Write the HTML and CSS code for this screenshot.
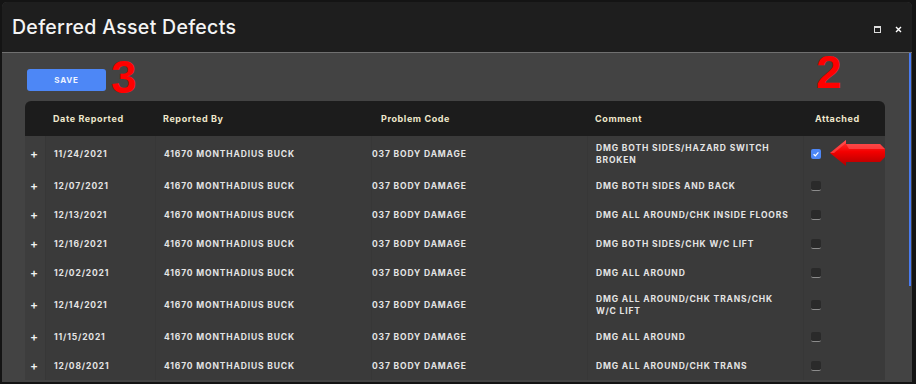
FILE: index.html
```html
<!DOCTYPE html>
<html>
<head>
    <title>Deferred Asset Defects</title>
    <link rel="stylesheet" href="styles.css">
</head>
<body>
    <div class="window">
        <div class="titlebar">
            <h1>Deferred Asset Defects</h1>
            <div class="win-actions">
                <span class="icon-max"></span>
                <svg class="icon-close" width="7" height="7" viewBox="0 0 7 7">
                    <path d="M1 1 L6 6 M6 1 L1 6" stroke="#fff" stroke-width="1.4"/>
                </svg>
            </div>
        </div>
        <div class="content">
            <div class="toolbar">
                <button class="btn-save">SAVE</button>
            </div>
            <table class="grid">
                <colgroup>
                    <col class="c-exp">
                    <col class="c-date">
                    <col class="c-by">
                    <col class="c-code">
                    <col class="c-comment">
                    <col class="c-att">
                </colgroup>
                <thead>
                    <tr>
                        <th></th>
                        <th>Date Reported</th>
                        <th>Reported By</th>
                        <th class="th-code">Problem Code</th>
                        <th>Comment</th>
                        <th class="th-att">Attached</th>
                    </tr>
                </thead>
                <tbody>
                    <tr>
                        <td class="exp">+</td>
                        <td>11/24/2021</td>
                        <td>41670 MONTHADIUS BUCK</td>
                        <td class="code">037 BODY DAMAGE</td>
                        <td>DMG BOTH SIDES/HAZARD SWITCH<br>BROKEN</td>
                        <td class="att"><span class="chk on"><svg width="10" height="10" viewBox="0 0 10 10"><path d="M2.6 5.2 L4.3 6.8 L7.4 3.4" fill="none" stroke="#fff" stroke-width="1.2"/></svg></span></td>
                    </tr>
                    <tr>
                        <td class="exp">+</td>
                        <td>12/07/2021</td>
                        <td>41670 MONTHADIUS BUCK</td>
                        <td class="code">037 BODY DAMAGE</td>
                        <td>DMG BOTH SIDES AND BACK</td>
                        <td class="att"><span class="chk"></span></td>
                    </tr>
                    <tr>
                        <td class="exp">+</td>
                        <td>12/13/2021</td>
                        <td>41670 MONTHADIUS BUCK</td>
                        <td class="code">037 BODY DAMAGE</td>
                        <td>DMG ALL AROUND/CHK INSIDE FLOORS</td>
                        <td class="att"><span class="chk"></span></td>
                    </tr>
                    <tr>
                        <td class="exp">+</td>
                        <td>12/16/2021</td>
                        <td>41670 MONTHADIUS BUCK</td>
                        <td class="code">037 BODY DAMAGE</td>
                        <td>DMG BOTH SIDES/CHK W/C LIFT</td>
                        <td class="att"><span class="chk"></span></td>
                    </tr>
                    <tr>
                        <td class="exp">+</td>
                        <td>12/02/2021</td>
                        <td>41670 MONTHADIUS BUCK</td>
                        <td class="code">037 BODY DAMAGE</td>
                        <td>DMG ALL AROUND</td>
                        <td class="att"><span class="chk"></span></td>
                    </tr>
                    <tr>
                        <td class="exp">+</td>
                        <td>12/14/2021</td>
                        <td>41670 MONTHADIUS BUCK</td>
                        <td class="code">037 BODY DAMAGE</td>
                        <td>DMG ALL AROUND/CHK TRANS/CHK<br>W/C LIFT</td>
                        <td class="att"><span class="chk"></span></td>
                    </tr>
                    <tr>
                        <td class="exp">+</td>
                        <td>11/15/2021</td>
                        <td>41670 MONTHADIUS BUCK</td>
                        <td class="code">037 BODY DAMAGE</td>
                        <td>DMG ALL AROUND</td>
                        <td class="att"><span class="chk"></span></td>
                    </tr>
                    <tr>
                        <td class="exp">+</td>
                        <td>12/08/2021</td>
                        <td>41670 MONTHADIUS BUCK</td>
                        <td class="code">037 BODY DAMAGE</td>
                        <td>DMG ALL AROUND/CHK TRANS</td>
                        <td class="att"><span class="chk"></span></td>
                    </tr>
                </tbody>
            </table>
            <div class="scroll-thumb"></div>
        </div>

        <!-- annotation marks drawn over the screenshot -->
        <span class="mark mark-3">3</span>
        <span class="mark mark-2">2</span>
        <svg class="arrow" width="56" height="28" viewBox="0 0 56 28">
            <defs>
                <linearGradient id="ar" x1="0" y1="0" x2="0" y2="1">
                    <stop offset="0" stop-color="#ff3a3a"/>
                    <stop offset="0.45" stop-color="#f40000"/>
                    <stop offset="1" stop-color="#b00000"/>
                </linearGradient>
            </defs>
            <path d="M0 14 L16 1 L16 5 L50 5 L55 10 L55 18 L50 23 L16 23 L16 27 Z" fill="url(#ar)"/>
            <path d="M16 5 L50 5 L55 10 L19 10 Z" fill="#ff6060" opacity="0.55"/>
            <path d="M0 14 L16 1 L16 4 L4 14 Z" fill="#ff6a6a" opacity="0.5"/>
        </svg>
    </div>
</body>
</html>
```

FILE: styles.css
```css
body {
    margin: 0;
    padding: 2px 4px 2px 2px;
    background-color: #141414;
    font-family: Inter, "Open Sans", sans-serif;
}

.window {
    position: relative;
    width: 910px;
    height: 380px;
    border-radius: 5px 5px 0 0;
    overflow: hidden;
    background-color: #434343;
}

.titlebar {
    height: 50px;
    background-color: #1e1e1e;
    border-bottom: 1px solid #707070;
    display: flex;
    align-items: center;
    justify-content: space-between;
    padding: 0 10px 0 10px;
}

.titlebar h1 {
    margin: 0;
    font-size: 19.5px;
    font-weight: 500;
    letter-spacing: 0.3px;
    color: #f4f4f4;
}

.win-actions {
    display: flex;
    align-items: center;
    gap: 14px;
    padding-top: 4px;
}

.icon-max {
    width: 5px;
    height: 4px;
    border: 1px solid #ddd;
    border-top-width: 2px;
}

.content {
    position: relative;
    height: 329px;
    padding: 14px 27px 0 23px;
}

.toolbar {
    padding-left: 2px;
    margin-bottom: 10px;
}

.btn-save {
    width: 79px;
    height: 22px;
    border: none;
    border-radius: 3px;
    background-color: #4d87f6;
    color: #eef3ff;
    font-family: Inter, sans-serif;
    font-size: 8px;
    font-weight: 700;
    letter-spacing: 0.8px;
}

.grid {
    width: 860px;
    border-collapse: separate;
    border-spacing: 0;
    table-layout: fixed;
    font-size: 8.5px;
    font-weight: 700;
    letter-spacing: 0.85px;
    color: #e4e4e4;
}

.c-exp { width: 20px; }
.c-date { width: 110px; }
.c-by { width: 216px; }
.c-code { width: 216px; }
.c-comment { width: 216px; }
.c-att { width: 82px; }

.grid th {
    height: 35px;
    padding: 0 0 0 8px;
    background-color: #1c1c1c;
    color: #efe8cc;
    text-align: left;
    font-size: 9px;
    font-weight: 700;
    letter-spacing: 0.6px;
}

.grid th:first-child {
    border-top-left-radius: 6px;
}

.grid th:last-child {
    border-top-right-radius: 6px;
}

.grid th.th-code {
    padding-left: 10px;
}

.grid th.th-att {
    padding-left: 12px;
}

.grid td {
    height: 18px;
    padding: 6px 0 5px 8px;
    line-height: 12px;
    background-color: #3a3a3a;
    border-left: 1px solid #373737;
    vertical-align: middle;
}

.grid td.exp {
    padding-left: 5px;
    border-left: none;
    background-color: #3d3d3d;
    font-size: 12px;
    font-weight: 600;
    color: #f2f2f2;
}

.grid td.code {
    padding-left: 0;
}

.grid td.att {
    padding-left: 7px;
}

.chk {
    display: block;
    width: 10px;
    height: 9px;
    border-radius: 2px;
    background-color: #2a2a2a;
    border-bottom: 1px solid #8c8c8c;
}

.chk.on {
    height: 10px;
    border-bottom: none;
    background-color: #4d87f6;
}

.chk svg {
    display: block;
}

.scroll-thumb {
    position: absolute;
    right: 1px;
    top: 0;
    width: 2px;
    height: 233px;
    background-color: #4a7cf2;
}

.mark {
    position: absolute;
    font-family: "Liberation Sans", Arial, sans-serif;
    font-weight: 700;
    font-size: 46px;
    line-height: 1;
    color: #ff0000;
}

.mark-3 {
    left: 109px;
    top: 52px;
}

.mark-2 {
    left: 814px;
    top: 47px;
}

.arrow {
    position: absolute;
    left: 828px;
    top: 137px;
}
```
